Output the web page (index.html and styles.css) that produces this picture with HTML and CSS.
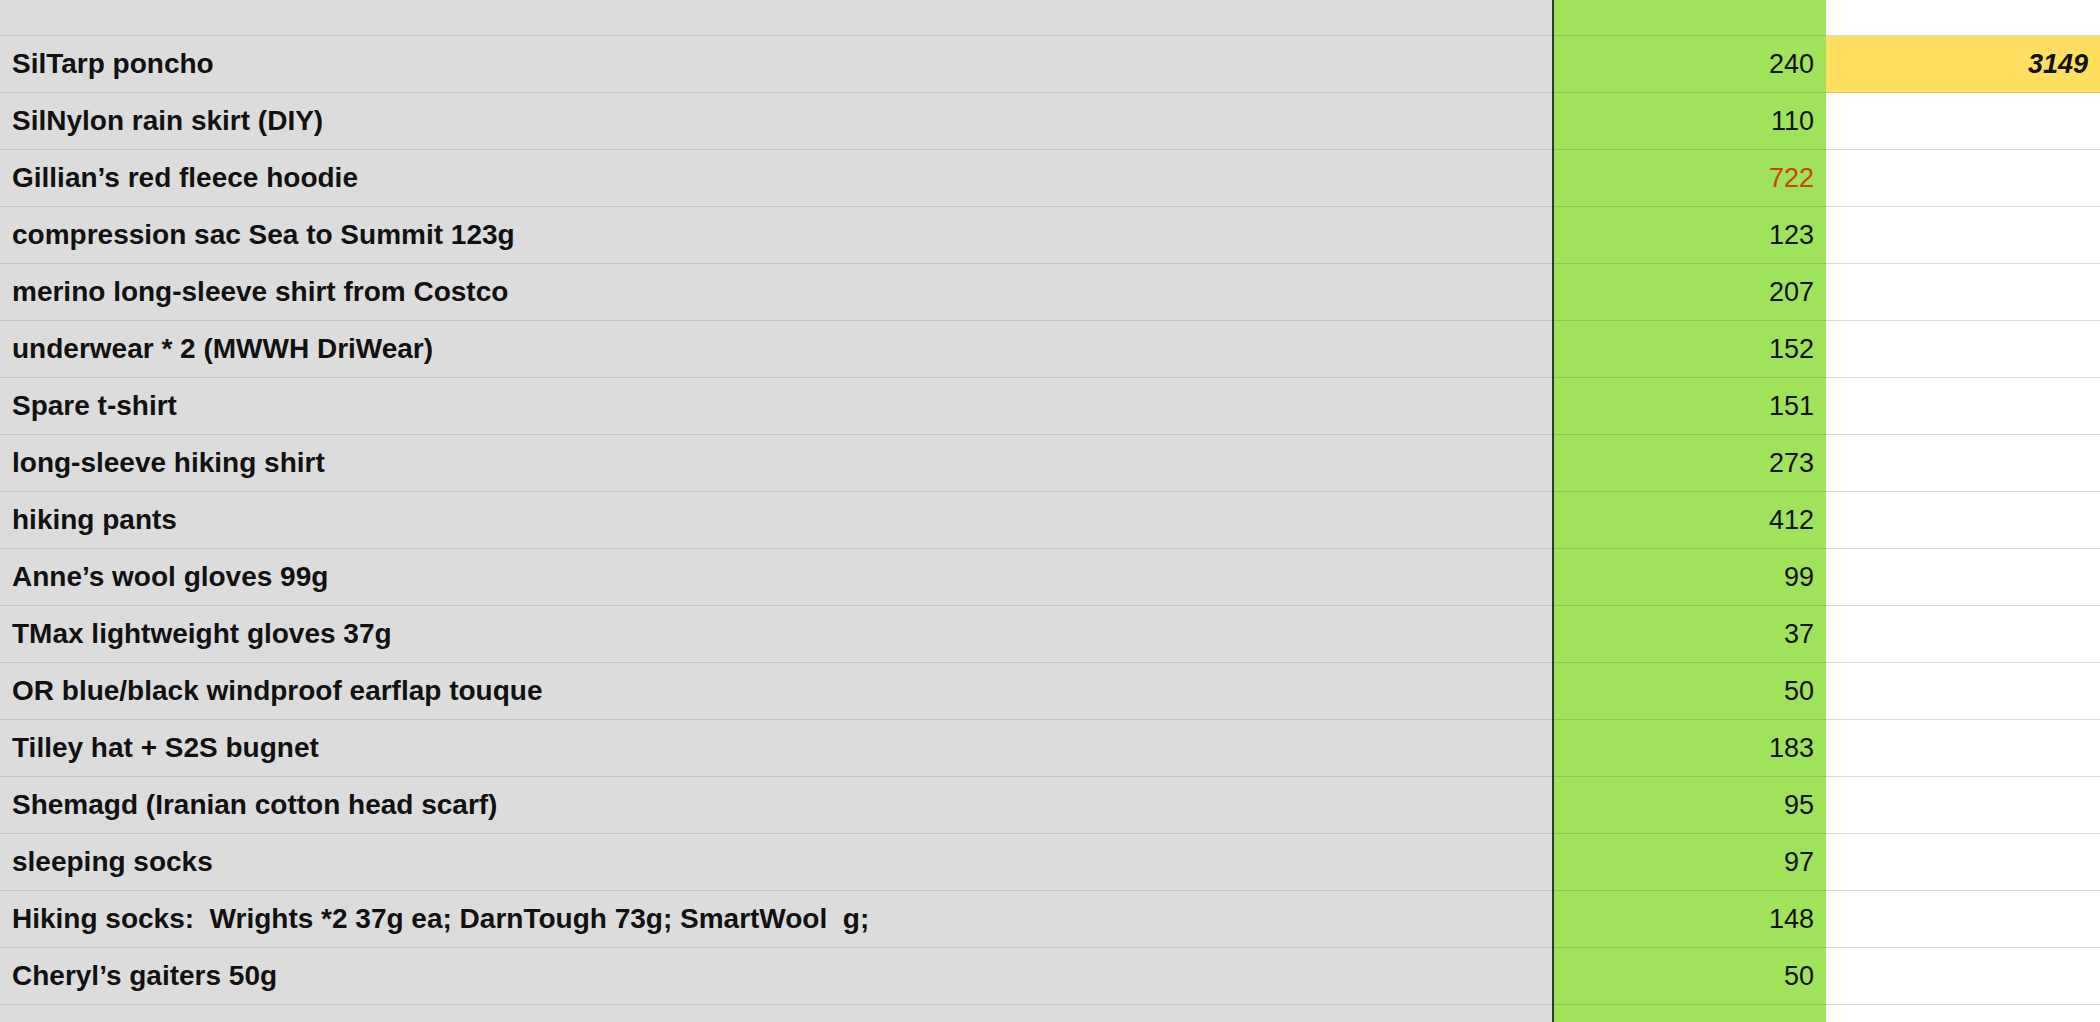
FILE: index.html
```html
<!DOCTYPE html>
<html lang="en">
<head>
  <meta charset="UTF-8" />
  <title>Gear weights</title>
  <link rel="stylesheet" href="styles.css">
</head>
<body>
  <table class="sheet">
    <colgroup>
      <col class="col-item">
      <col class="col-grams">
      <col class="col-total">
    </colgroup>
    <tbody>
      <tr class="edge-top"><td class="item"></td><td class="grams"></td><td class="total"></td></tr>
      <tr><td class="item">SilTarp poncho</td><td class="grams">240</td><td class="total sum">3149</td></tr>
      <tr><td class="item">SilNylon rain skirt (DIY)</td><td class="grams">110</td><td class="total"></td></tr>
      <tr><td class="item">Gillian’s red fleece hoodie</td><td class="grams warn">722</td><td class="total"></td></tr>
      <tr><td class="item">compression sac Sea to Summit 123g</td><td class="grams">123</td><td class="total"></td></tr>
      <tr><td class="item">merino long-sleeve shirt from Costco</td><td class="grams">207</td><td class="total"></td></tr>
      <tr><td class="item">underwear * 2 (MWWH DriWear)</td><td class="grams">152</td><td class="total"></td></tr>
      <tr><td class="item">Spare t-shirt</td><td class="grams">151</td><td class="total"></td></tr>
      <tr><td class="item">long-sleeve hiking shirt</td><td class="grams">273</td><td class="total"></td></tr>
      <tr><td class="item">hiking pants</td><td class="grams">412</td><td class="total"></td></tr>
      <tr><td class="item">Anne’s wool gloves 99g</td><td class="grams">99</td><td class="total"></td></tr>
      <tr><td class="item">TMax lightweight gloves 37g</td><td class="grams">37</td><td class="total"></td></tr>
      <tr><td class="item">OR blue/black windproof earflap touque</td><td class="grams">50</td><td class="total"></td></tr>
      <tr><td class="item">Tilley hat + S2S bugnet</td><td class="grams">183</td><td class="total"></td></tr>
      <tr><td class="item">Shemagd (Iranian cotton head scarf)</td><td class="grams">95</td><td class="total"></td></tr>
      <tr><td class="item">sleeping socks</td><td class="grams">97</td><td class="total"></td></tr>
      <tr><td class="item">Hiking socks:&nbsp; Wrights *2 37g ea; DarnTough 73g; SmartWool&nbsp; g;</td><td class="grams">148</td><td class="total"></td></tr>
      <tr><td class="item">Cheryl’s gaiters 50g</td><td class="grams">50</td><td class="total"></td></tr>
      <tr class="edge-bottom"><td class="item"></td><td class="grams"></td><td class="total"></td></tr>
    </tbody>
  </table>
</body>
</html>
```

FILE: styles.css
```css
body {
  margin: 0;
  background: #fff;
  font-family: "Liberation Sans", Arial, sans-serif;
  overflow: hidden;
}
.sheet {
  width: 2100px;
  border-collapse: collapse;
  table-layout: fixed;
}
.col-item {
  width: 1553px;
}
.col-grams {
  width: 273px;
}
.sheet td {
  height: 56px;
  padding: 0 12px;
  border-bottom: 1px solid #c4c4c4;
  white-space: nowrap;
  overflow: hidden;
}
.sheet .edge-top td {
  height: 35px;
}
.sheet .edge-bottom td {
  height: 40px;
  border-bottom: none;
}
.item {
  background: #dddcdd;
  border-right: 2px solid #2f3a2a;
  color: #111;
  font-weight: bold;
  font-size: 28px;
  padding-left: 13px;
}
.sheet td.grams {
  background: #9fe35a;
  border-bottom-color: #8bc851;
  text-align: right;
  font-size: 27px;
  color: #111;
}
.sheet td.warn {
  color: #d2400e;
}
.sheet td.total {
  background: #fff;
  border-bottom-color: #d9d9d9;
  text-align: right;
  font-size: 27px;
}
.sheet td.sum {
  background: #ffdf5f;
  border-bottom-color: #e3c757;
  font-weight: bold;
  font-style: italic;
  color: #111;
}
```
